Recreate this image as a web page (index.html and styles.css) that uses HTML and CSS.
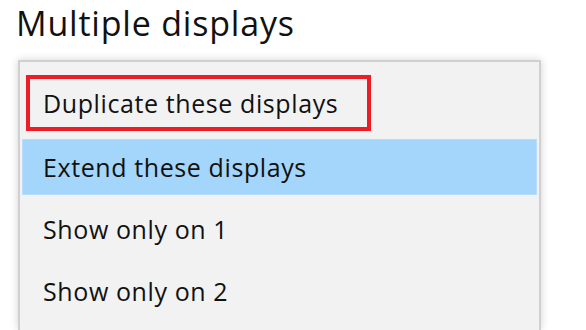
FILE: index.html
```html
<html lang="en">
<head>
  <meta charset="UTF-8">
  <meta name="viewport" content="width=device-width, initial-scale=1.0">
  <title>Multiple displays</title>
  <link rel="stylesheet" href="styles.css">
</head>
<body>

  <h1 class="title">Multiple displays</h1>

  <div class="menu">
    <div class="item item-first">
      <span class="callout">Duplicate these displays</span>
    </div>
    <div class="item selected">Extend these displays</div>
    <div class="item">Show only on 1</div>
    <div class="item">Show only on 2</div>
  </div>

</body>
</html>
```

FILE: styles.css
```css
body {
    margin: 0;
    background: #ffffff;
    color: #111111;
    font-family: "Open Sans", "Noto Sans", sans-serif;
    overflow: hidden;
    height: 330px;
}

.title {
    font-size: 34px;
    font-weight: normal;
    margin: 0;
    padding: 0 0 0 16px;
    height: 60px;
    line-height: 46px;
    letter-spacing: 0.8px;
}

.menu {
    margin-left: 18px;
    width: 523px;
    height: 270px;
    box-sizing: border-box;
    background: #f2f2f2;
    border: 2px solid #d0d0d0;
    border-bottom: none;
    box-shadow: 0 0 8px rgba(0, 0, 0, 0.18);
    padding: 9px 2px 0 2px;
}

.item {
    height: 56px;
    margin-top: 6px;
    padding-left: 21px;
    display: flex;
    align-items: center;
    font-size: 25px;
    letter-spacing: 0.6px;
    color: #111111;
}

.item-first {
    padding-left: 4px;
    align-items: flex-start;
}

.callout {
    display: flex;
    align-items: center;
    box-sizing: border-box;
    width: 345px;
    height: 56px;
    margin-top: -2px;
    padding-left: 13px;
    border: 4px solid #ee1c25;
}

.selected {
    background: #a4d5fb;
    box-shadow: inset 0 0 0 1px #b6ddfb;
}
```
